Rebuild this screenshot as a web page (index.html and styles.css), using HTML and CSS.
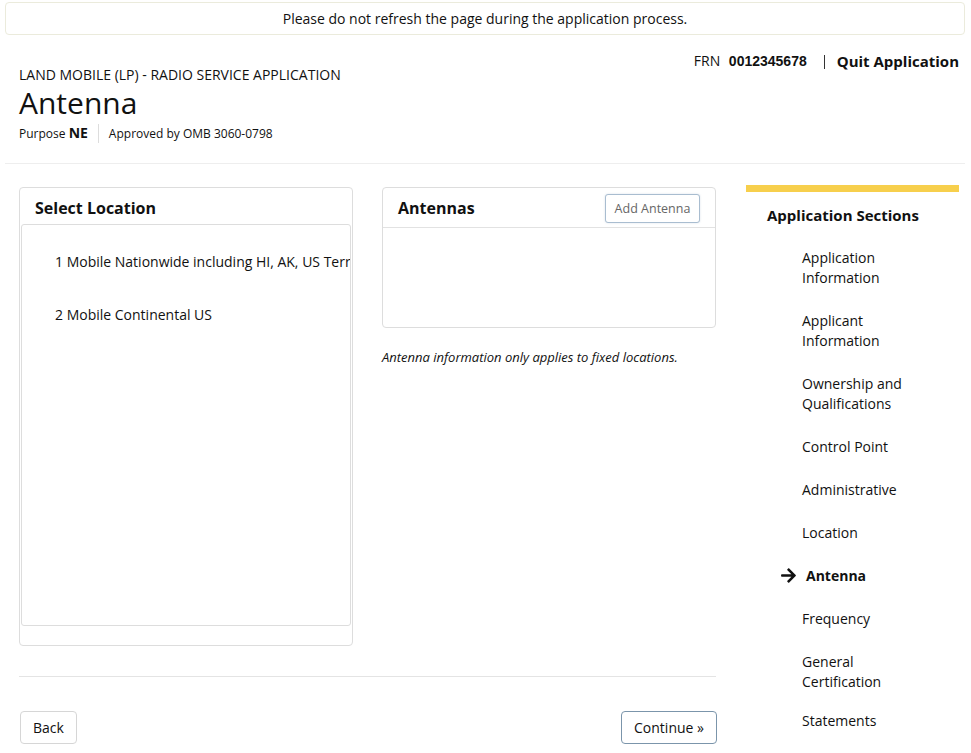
FILE: index.html
```html
<!DOCTYPE html>
<html>
<head>
<meta charset="utf-8">
<link rel="stylesheet" href="styles.css">
</head>
<body>
<div class="banner">Please do not refresh the page during the application process.</div>
<header class="header">
  <div class="head-left">
    <div class="subtitle">LAND MOBILE (LP) - RADIO SERVICE APPLICATION</div>
    <h1 class="title">Antenna</h1>
    <div class="meta"><span class="purpose">Purpose <b>NE</b></span><span class="omb">Approved by OMB 3060-0798</span></div>
  </div>
  <div class="head-right">
    <span class="frn">FRN <b class="frn-num">0012345678</b></span>
    <span class="sep"></span>
    <span class="quit">Quit Application</span>
  </div>
</header>
<hr class="rule">
<main class="main">
  <div class="content">
    <div class="cards">
      <section class="card card-loc">
        <div class="card-head head-loc"><h2>Select Location</h2></div>
        <div class="loc-list">
          <div class="loc-item">1 Mobile Nationwide including HI, AK, US Terr</div>
          <div class="loc-item">2 Mobile Continental US</div>
        </div>
        <div class="loc-foot"></div>
      </section>
      <div class="col-ant">
        <section class="card card-ant">
          <div class="card-head head-ant"><h2>Antennas</h2><button class="btn-add">Add Antenna</button></div>
          <div class="ant-body"></div>
        </section>
        <p class="note">Antenna information only applies to fixed locations.</p>
      </div>
    </div>
    <hr class="rule2">
    <div class="actions">
      <button class="btn">Back</button>
      <button class="btn btn-cont">Continue »</button>
    </div>
  </div>
  <aside class="sidebar">
    <div class="bar"></div>
    <h3 class="side-title">Application Sections</h3>
    <ul class="sections">
      <li>Application<br>Information</li>
      <li>Applicant<br>Information</li>
      <li>Ownership and<br>Qualifications</li>
      <li>Control Point</li>
      <li>Administrative</li>
      <li>Location</li>
      <li class="current"><svg class="arrow" viewBox="0 0 448 512" width="17" height="17"><path d="M190.5 66.9l22.2-22.2c9.4-9.4 24.6-9.4 33.9 0L441 239c9.4 9.4 9.4 24.6 0 33.9L246.6 467.3c-9.4 9.4-24.6 9.4-33.9 0l-22.2-22.2c-9.5-9.5-9.3-25 .4-34.3L311.4 296H24c-13.3 0-24-10.7-24-24v-32c0-13.3 10.7-24 24-24h287.4L190.9 101.2c-9.8-9.3-10-24.8-.4-34.3z"/></svg>Antenna</li>
      <li>Frequency</li>
      <li>General<br>Certification</li>
      <li class="last">Statements</li>
    </ul>
  </aside>
</main>
</body>
</html>
```
FILE: styles.css
```css
* { box-sizing: border-box; }
html, body { margin: 0; padding: 0; background: #fff; }
body {
  font-family: "Open Sans", "Noto Sans", sans-serif;
  color: #111;
  width: 971px;
  overflow: hidden;
}
.banner {
  margin: 2px 6px 0 5px;
  height: 33px;
  border: 1px solid #ebebdc;
  border-radius: 4px;
  text-align: center;
  font-size: 14px;
  line-height: 31px;
  color: #111;
}
.header {
  display: flex;
  justify-content: space-between;
  padding: 0 12px 0 19px;
}
.head-left { padding-top: 30px; }
.subtitle { font-size: 14px; line-height: 20px; }
.title {
  margin: 0;
  font-size: 30px;
  font-weight: 400;
  line-height: 36px;
}
.meta {
  margin-top: 3px;
  display: flex;
  align-items: center;
  font-size: 12px;
  line-height: 18px;
}
.purpose { padding-right: 10px; border-right: 1px solid #ddd; }
.purpose b { font-size: 14px; font-weight: 700; }
.omb { padding-left: 10px; }
.head-right {
  padding-top: 16px;
  font-size: 14px;
  line-height: 20px;
  display: flex;
  align-items: center;
  height: 36px;
  color: #111;
}
.frn-num {
  font-family: "Liberation Sans", Arial, sans-serif;
  font-size: 14px;
  font-weight: 700;
  margin-left: 5px;
}
.sep {
  display: block;
  width: 0;
  height: 14px;
  border-left: 1px solid #333;
  margin: 1px 12px 0 17px;
}
.quit { font-weight: 700; font-size: 15px; }
.rule {
  margin: 20px 6px 0 5px;
  border: 0;
  border-top: 1px solid #eee;
}
.main {
  display: flex;
  padding: 21px 0 0 19px;
}
.content { width: 697px; }
.cards { display: flex; gap: 29px; }
.card {
  border: 1px solid #ddd;
  border-radius: 4px;
  background: #fff;
}
.card-loc { width: 334px; height: 459px; display: flex; flex-direction: column; margin-top: 2px; }
.card-head {
  height: 36px;
  padding: 0 15px;
  display: flex;
  align-items: center;
}
.head-loc { padding-top: 3px; }
.card-head h2 { margin: 0; font-size: 16px; font-weight: 700; }
.loc-list {
  margin: 0 1px;
  height: 402px;
  border: 1px solid #ddd;
  border-radius: 3px;
  padding-top: 25px;
  overflow: hidden;
}
.loc-item {
  padding-left: 33px;
  font-size: 14px;
  line-height: 24px;
  white-space: nowrap;
  overflow: hidden;
  margin-bottom: 29px;
}
.loc-foot { flex: 1; }
.col-ant { width: 334px; margin-top: 2px; }
.card-ant { height: 141px; }
.head-ant {
  height: 40px;
  border-bottom: 1px solid #e2e2e2;
  justify-content: space-between;
  padding: 0 15px 0 15px;
}
.btn-add {
  font-family: "Open Sans", "Noto Sans", sans-serif;
  font-size: 12.5px;
  color: #666;
  background: #fff;
  border: 1px solid #a9bdd0;
  border-radius: 3px;
  height: 29px;
  width: 95px;
  padding: 0;
  box-shadow: 0 0 2px rgba(120,150,180,0.3);
  margin-top: 1px;
}
.note {
  margin: 20px 0 0;
  font-size: 13px;
  font-style: italic;
  line-height: 18px;
}
.rule2 {
  margin: 30px 0 0;
  border: 0;
  border-top: 1px solid #e4e4e4;
}
.actions {
  display: flex;
  justify-content: space-between;
  margin-top: 34px;
}
.btn {
  font-family: "Open Sans", "Noto Sans", sans-serif;
  font-size: 14px;
  color: #111;
  background: #fff;
  border: 1px solid #d6d6d6;
  border-radius: 4px;
  height: 33px;
  padding: 0 12px;
  margin-left: 1px;
  white-space: nowrap;
}
.btn-cont {
  border-color: #7b95ab;
  padding: 0 12px;
  margin-right: -1px;
}
.sidebar { width: 213px; margin-left: 30px; }
.bar { height: 7px; background: #f7cf4c; }
.side-title {
  margin: 13px 0 0 21px;
  font-size: 15px;
  font-weight: 700;
  line-height: 20px;
}
.sections {
  list-style: none;
  margin: 23px 0 0;
  padding: 0 0 0 56px;
  font-size: 14px;
  line-height: 20px;
}
.sections li { margin-bottom: 23px; position: relative; }
.sections li.last { margin-top: -4px; }
.sections li.current { font-weight: 700; padding-left: 4px; }
.arrow {
  position: absolute;
  left: -22px;
  top: 1px;
  fill: #111;
}
```
